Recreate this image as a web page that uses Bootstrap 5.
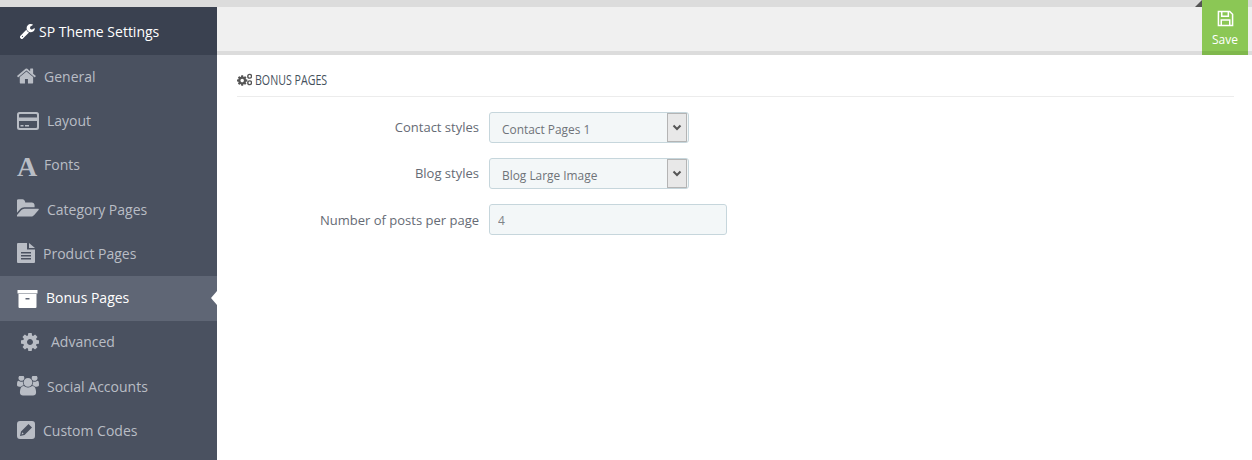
<!DOCTYPE html>
<html lang="en">
<head>
  <meta charset="UTF-8" />
  <meta name="viewport" content="width=device-width, initial-scale=1.0"/>
  <title>SP Theme Settings</title>
  <link href="https://cdn.jsdelivr.net/npm/bootstrap@5.3.0/dist/css/bootstrap.min.css" rel="stylesheet"/>
  <style>
    body {
      font-family: "Open Sans", "Noto Sans", sans-serif;
      font-size: 13px;
      background: #fff;
      height: 460px;
      overflow: hidden;
    }

    .top-strip {
      height: 7px;
      background: #dcdcdc;
      padding-right: 50px;
    }

    .strip-corner {
      width: 0;
      height: 0;
      border-left: 7px solid transparent;
      border-bottom: 7px solid #555;
    }

    .side-panel {
      width: 217px;
      height: 453px;
      background: #4a5160;
    }

    .side-title {
      height: 48px;
      padding-left: 20px;
      background: #3a4150;
      color: #fff;
      font-size: 14px;
    }

    .side-link {
      height: 44.25px;
      padding: 0 0 1.500px 17px;
      color: #b9bdc5;
      font-size: 14px;
      position: relative;
    }

    .side-link:hover {
      color: #b9bdc5;
    }

    .side-link svg {
      fill: currentColor;
      flex-shrink: 0;
    }

    .side-link.on {
      background: #5f6675;
      color: #fff;
    }

    .side-link.on::after {
      content: "";
      position: absolute;
      right: 0;
      top: 15px;
      border-top: 7px solid transparent;
      border-bottom: 7px solid transparent;
      border-right: 6px solid #fff;
    }

    .box-icon {
      margin-top: 3px;
    }

    .glyph-a {
      width: 19px;
      font-family: "Liberation Serif", serif;
      font-weight: 700;
      font-size: 28px;
      line-height: 1;
      text-align: center;
      margin-top: 5px;
    }

    .tool-bar {
      height: 48px;
      background: #f0f0f0;
      border-bottom: 4px solid #dcdcdc;
    }

    .save-btn {
      position: absolute;
      top: 0;
      right: 4px;
      width: 46px;
      height: 55px;
      background: #8bc755;
      border-bottom: 4px solid #7fb84c;
      color: #fff;
      font-size: 12px;
      padding-top: 10px;
    }

    .save-btn:hover {
      color: #fff;
    }

    .form-area {
      padding: 16px 18px 0 20px;
    }

    .area-head {
      height: 26px;
      padding-bottom: 8px;
      border-bottom: 1px solid #ececec;
      font-size: 14px;
      color: #45505c;
      margin-bottom: 15px;
    }

    .area-head svg {
      margin-right: 3px;
      flex-shrink: 0;
    }

    .area-head span {
      transform: scaleX(.76);
      transform-origin: left center;
    }

    .set-label {
      width: 242px;
      margin: 0 10px 0 0;
      text-align: right;
      color: #666b75;
    }

    .set-row {
      margin-bottom: 15px;
    }

    .set-select, .set-input {
      height: 31px;
      background-color: #f3f7f8;
      border: 1px solid #c6d6dc;
      border-radius: 3px;
      color: #6f7378;
      box-shadow: none;
    }

    .set-select {
      width: 200px;
      padding: 4px 24px 0 12px;
      font-size: 11.900px;
      background-image: url("data:image/svg+xml,%3Csvg xmlns='http://www.w3.org/2000/svg' width='21' height='29'%3E%3Crect x='.5' y='.5' width='19' height='28' fill='%23e8e8e8' stroke='%23b4b4b4'/%3E%3Cpath d='M6.500 12.500l3.500 3.500 3.500-3.500' fill='none' stroke='%23555' stroke-width='2'/%3E%3C/svg%3E");
      background-position: right 0 center;
      background-size: 21px 29px;
      background-repeat: no-repeat;
    }

    .set-input {
      width: 238px;
      padding: 2px 8px 0;
      font-size: 12px;
      color: #7f8387;
    }

    .set-label-low {
      padding-top: 2px;
    }
  </style>
</head>
<body>

  <div class="top-strip d-flex justify-content-end">
    <div class="strip-corner"></div>
  </div>

  <a href="#" class="save-btn d-flex flex-column align-items-center gap-1 text-decoration-none">
    <svg width="17" height="17" viewBox="0 0 18 18" fill="none" stroke="#fff" stroke-width="1.6">
      <path d="M1.500 1.500h12l3 3v12h-15z"/>
      <path d="M5 1.500v5h7v-5M4.500 16.500v-6h9v6"/>
    </svg>
    <span>Save</span>
  </a>

  <div class="d-flex">
    <!-- Menu lateral -->
    <div class="side-panel flex-shrink-0">
      <div class="side-title d-flex align-items-center gap-1">
        <svg width="15" height="15" viewBox="120 130 1620 1620" fill="#fff">
          <path d="M448 1472q0-26-19-45t-45-19-45 19-19 45 19 45 45 19 45-19 19-45zm644-420l-682 682q-37 37-90 37-52 0-91-37l-106-108q-38-36-38-90 0-53 38-91l681-681q39 98 114.500 173.500t173.500 114.500zm634-435q0 39-23 106-47 134-164.500 217.500t-258.500 83.500q-185 0-316.500-131.500t-131.500-316.500 131.500-316.500 316.500-131.500q58 0 121.500 16.500t107.500 46.500q16 11 16 28t-16 28l-293 169v224l193 107q5-3 79-48.500t135.500-81 70.500-35.500q15 0 23.500 10t8.500 25z"/>
        </svg>
        <span>SP Theme Settings</span>
      </div>
      <nav class="nav flex-column">
        <a href="#" class="nav-link side-link d-flex align-items-center gap-2">
          <svg width="19" height="19" viewBox="80 120 1640 1640"><path d="M1472 992v480q0 26-19 45t-45 19h-384v-384h-256v384h-384q-26 0-45-19t-19-45v-480q0-1 .5-3t.5-3l575-474 575 474q1 2 1 6zm223-69l-62 74q-8 9-21 11h-3q-13 0-21-7l-692-577-692 577q-12 8-24 7-13-2-21-11l-62-74q-8-10-7-23.500t11-21.500l719-599q32-26 76-26t76 26l244 204v-195q0-14 9-23t23-9h192q14 0 23 9t9 23v408l219 182q10 8 11 21.500t-7 23.500z"/></svg>
          <span>General</span>
        </a>
        <a href="#" class="nav-link side-link d-flex align-items-center gap-2">
          <svg width="22" height="18" viewBox="0 0 22 18"><path fill-rule="evenodd" d="M2.500 0h17A2.500 2.500 0 0 1 22 2.500v13a2.500 2.500 0 0 1-2.500 2.500h-17A2.500 2.500 0 0 1 0 15.500v-13A2.500 2.500 0 0 1 2.500 0zM2 3v2.500h18V3a1 1 0 0 0-1-1H3a1 1 0 0 0-1 1zm0 6v6a1 1 0 0 0 1 1h16a1 1 0 0 0 1-1V9zm1.500 4h3v1.500h-3zm4.500 0h4v1.500H8z"/></svg>
          <span>Layout</span>
        </a>
        <a href="#" class="nav-link side-link d-flex align-items-center gap-2">
          <span class="glyph-a">A</span>
          <span>Fonts</span>
        </a>
        <a href="#" class="nav-link side-link d-flex align-items-center gap-2">
          <svg width="22" height="22" viewBox="0 0 1800 1792"><path d="M1781 931q0 35-35 70l-336 396q-43 51-120.500 86.500t-143.500 35.500h-1088q-34 0-60.500-13t-26.500-43q0-35 35-74l336-396q43-51 120.500-86.500t143.500-35.500h1088q34 0 60.500 13t26.500 43zm-343-344v160h-832q-94 0-197 47.500t-164 119.500l-337 396-5 6q0-4-.5-12.500t-.5-12.500v-960q0-92 66-158t158-66h320q92 0 158 66t66 158v32h544q92 0 158 66t66 158z"/></svg>
          <span>Category Pages</span>
        </a>
        <a href="#" class="nav-link side-link d-flex align-items-center gap-2">
          <svg width="18" height="20" viewBox="0 0 18 20"><path fill-rule="evenodd" d="M1 0h9v6.500h8V19a1 1 0 0 1-1 1H1a1 1 0 0 1-1-1V1a1 1 0 0 1 1-1zm11 0l6 5h-6zM4 9v1.500h10V9zm0 3v1.500h10V12zm0 3v1.500h10V15z"/></svg>
          <span>Product Pages</span>
        </a>
        <a href="#" class="nav-link side-link on d-flex align-items-center gap-2">
          <svg class="box-icon" width="21" height="18" viewBox="0 0 20 18"><path fill-rule="evenodd" d="M0 0h20v3.500H0zM1 4h18v13a1 1 0 0 1-1 1H2a1 1 0 0 1-1-1zm7 4v1.500h4V8z"/></svg>
          <span>Bonus Pages</span>
        </a>
        <a href="#" class="nav-link side-link d-flex align-items-center gap-2">
          <svg class="mx-1" width="18" height="18" viewBox="128 128 1536 1536"><path d="M1152 896q0-106-75-181t-181-75-181 75-75 181 75 181 181 75 181-75 75-181zm512-109v222q0 12-8 23t-20 13l-185 28q-19 54-39 91 35 50 107 138 10 12 10 25t-9 23q-27 37-99 108t-94 71q-12 0-26-9l-138-108q-44 23-91 38-16 136-29 186-7 28-36 28h-222q-14 0-24.500-8.500t-11.500-21.500l-28-184q-49-16-90-37l-141 107q-10 9-25 9-14 0-25-11-126-114-165-168-7-10-7-23 0-12 8-23 15-21 51-66.500t54-70.500q-27-50-41-99l-183-27q-13-2-21-12.500t-8-23.500v-222q0-12 8-23t19-13l186-28q14-46 39-92-40-57-107-138-10-12-10-24 0-10 9-23 26-36 98.500-107.500t94.500-71.500q13 0 26 10l138 107q44-23 91-38 16-136 29-186 7-28 36-28h222q14 0 24.500 8.500t11.500 21.500l28 184q49 16 90 37l142-107q9-9 24-9 13 0 25 10 129 119 165 170 7 8 7 22 0 12-8 23-15 21-51 66.500t-54 70.500q26 50 41 98l183 28q13 2 21 12.500t8 23.500z"/></svg>
          <span>Advanced</span>
        </a>
        <a href="#" class="nav-link side-link d-flex align-items-center gap-2">
          <svg width="22" height="20" viewBox="0 128 1920 1664"><path d="M593 896q-162 5-265 128h-134q-82 0-138-40.500t-56-118.500q0-353 124-353 6 0 43.500 21t97.500 42.500 119 21.500q67 0 133-23-5 37-5 66 0 139 81 256zm1071 637q0 120-73 189.500t-194 69.500h-874q-121 0-194-69.500t-73-189.500q0-53 3.500-103.500t14-109 26.500-108.500 43-97.500 62-81 85.500-53.500 111.500-20q10 0 43 21.500t73 48 107 48 135 21.500 135-21.500 107-48 73-48 43-21.500q61 0 111.500 20t85.500 53.500 62 81 43 97.500 26.500 108.500 14 109 3.500 103.500zm-1024-1277q0 106-75 181t-181 75-181-75-75-181 75-181 181-75 181 75 75 181zm704 384q0 159-112.500 271.500t-271.500 112.500-271.500-112.500-112.500-271.500 112.500-271.500 271.500-112.500 271.500 112.500 112.500 271.500zm576 225q0 78-56 118.500t-138 40.500h-134q-103-123-265-128 81-117 81-256 0-29-5-66 66 23 133 23 59 0 119-21.500t97.500-42.500 43.500-21q124 0 124 353zm-128-609q0 106-75 181t-181 75-181-75-75-181 75-181 181-75 181 75 75 181z"/></svg>
          <span>Social Accounts</span>
        </a>
        <a href="#" class="nav-link side-link d-flex align-items-center gap-2">
          <svg width="18" height="18" viewBox="0 0 18 18"><path fill-rule="evenodd" d="M3 0h12a3 3 0 0 1 3 3v12a3 3 0 0 1-3 3H3a3 3 0 0 1-3-3V3a3 3 0 0 1 3-3zm8.500 3L4 10.500 3 15l4.500-1L15 6.500zM5.200 11.300l1.500 1.500-2.100.6z"/></svg>
          <span>Custom Codes</span>
        </a>
      </nav>
    </div>

    <!-- Conteudo -->
    <div class="flex-grow-1">
      <div class="tool-bar"></div>
      <div class="form-area">
        <div class="area-head d-flex align-items-center">
          <svg width="15" height="13" viewBox="0 0 16 13" fill="#555">
            <g transform="translate(0 2) scale(.0072) translate(-128 -128)"><path d="M1152 896q0-106-75-181t-181-75-181 75-75 181 75 181 181 75 181-75 75-181zm512-109v222q0 12-8 23t-20 13l-185 28q-19 54-39 91 35 50 107 138 10 12 10 25t-9 23q-27 37-99 108t-94 71q-12 0-26-9l-138-108q-44 23-91 38-16 136-29 186-7 28-36 28h-222q-14 0-24.500-8.500t-11.500-21.500l-28-184q-49-16-90-37l-141 107q-10 9-25 9-14 0-25-11-126-114-165-168-7-10-7-23 0-12 8-23 15-21 51-66.500t54-70.500q-27-50-41-99l-183-27q-13-2-21-12.500t-8-23.500v-222q0-12 8-23t19-13l186-28q14-46 39-92-40-57-107-138-10-12-10-24 0-10 9-23 26-36 98.500-107.500t94.500-71.500q13 0 26 10l138 107q44-23 91-38 16-136 29-186 7-28 36-28h222q14 0 24.500 8.500t11.500 21.500l28 184q49 16 90 37l142-107q9-9 24-9 13 0 25 10 129 119 165 170 7 8 7 22 0 12-8 23-15 21-51 66.500t-54 70.500q26 50 41 98l183 28q13 2 21 12.500t8 23.500z"/></g>
            <circle cx="13.500" cy="3" r="2" fill="none" stroke="#555" stroke-width="1.500"/>
            <circle cx="13.500" cy="10" r="2" fill="none" stroke="#555" stroke-width="1.500"/>
          </svg>
          <span>BONUS PAGES</span>
        </div>

        <form>
          <div class="set-row d-flex align-items-center">
            <label class="set-label" for="contactStyle">Contact styles</label>
            <select class="form-select set-select" id="contactStyle">
              <option>Contact Pages 1</option>
              <option>Contact Pages 2</option>
            </select>
          </div>
          <div class="set-row d-flex align-items-center">
            <label class="set-label" for="blogStyle">Blog styles</label>
            <select class="form-select set-select" id="blogStyle">
              <option>Blog Large Image</option>
              <option>Blog Small Image</option>
            </select>
          </div>
          <div class="set-row d-flex align-items-center">
            <label class="set-label set-label-low" for="postCount">Number of posts per page</label>
            <input type="text" class="form-control set-input" id="postCount" value="4">
          </div>
        </form>
      </div>
    </div>
  </div>

  <script src="https://cdn.jsdelivr.net/npm/bootstrap@5.3.0/dist/js/bootstrap.bundle.min.js"></script>
</body>
</html>
